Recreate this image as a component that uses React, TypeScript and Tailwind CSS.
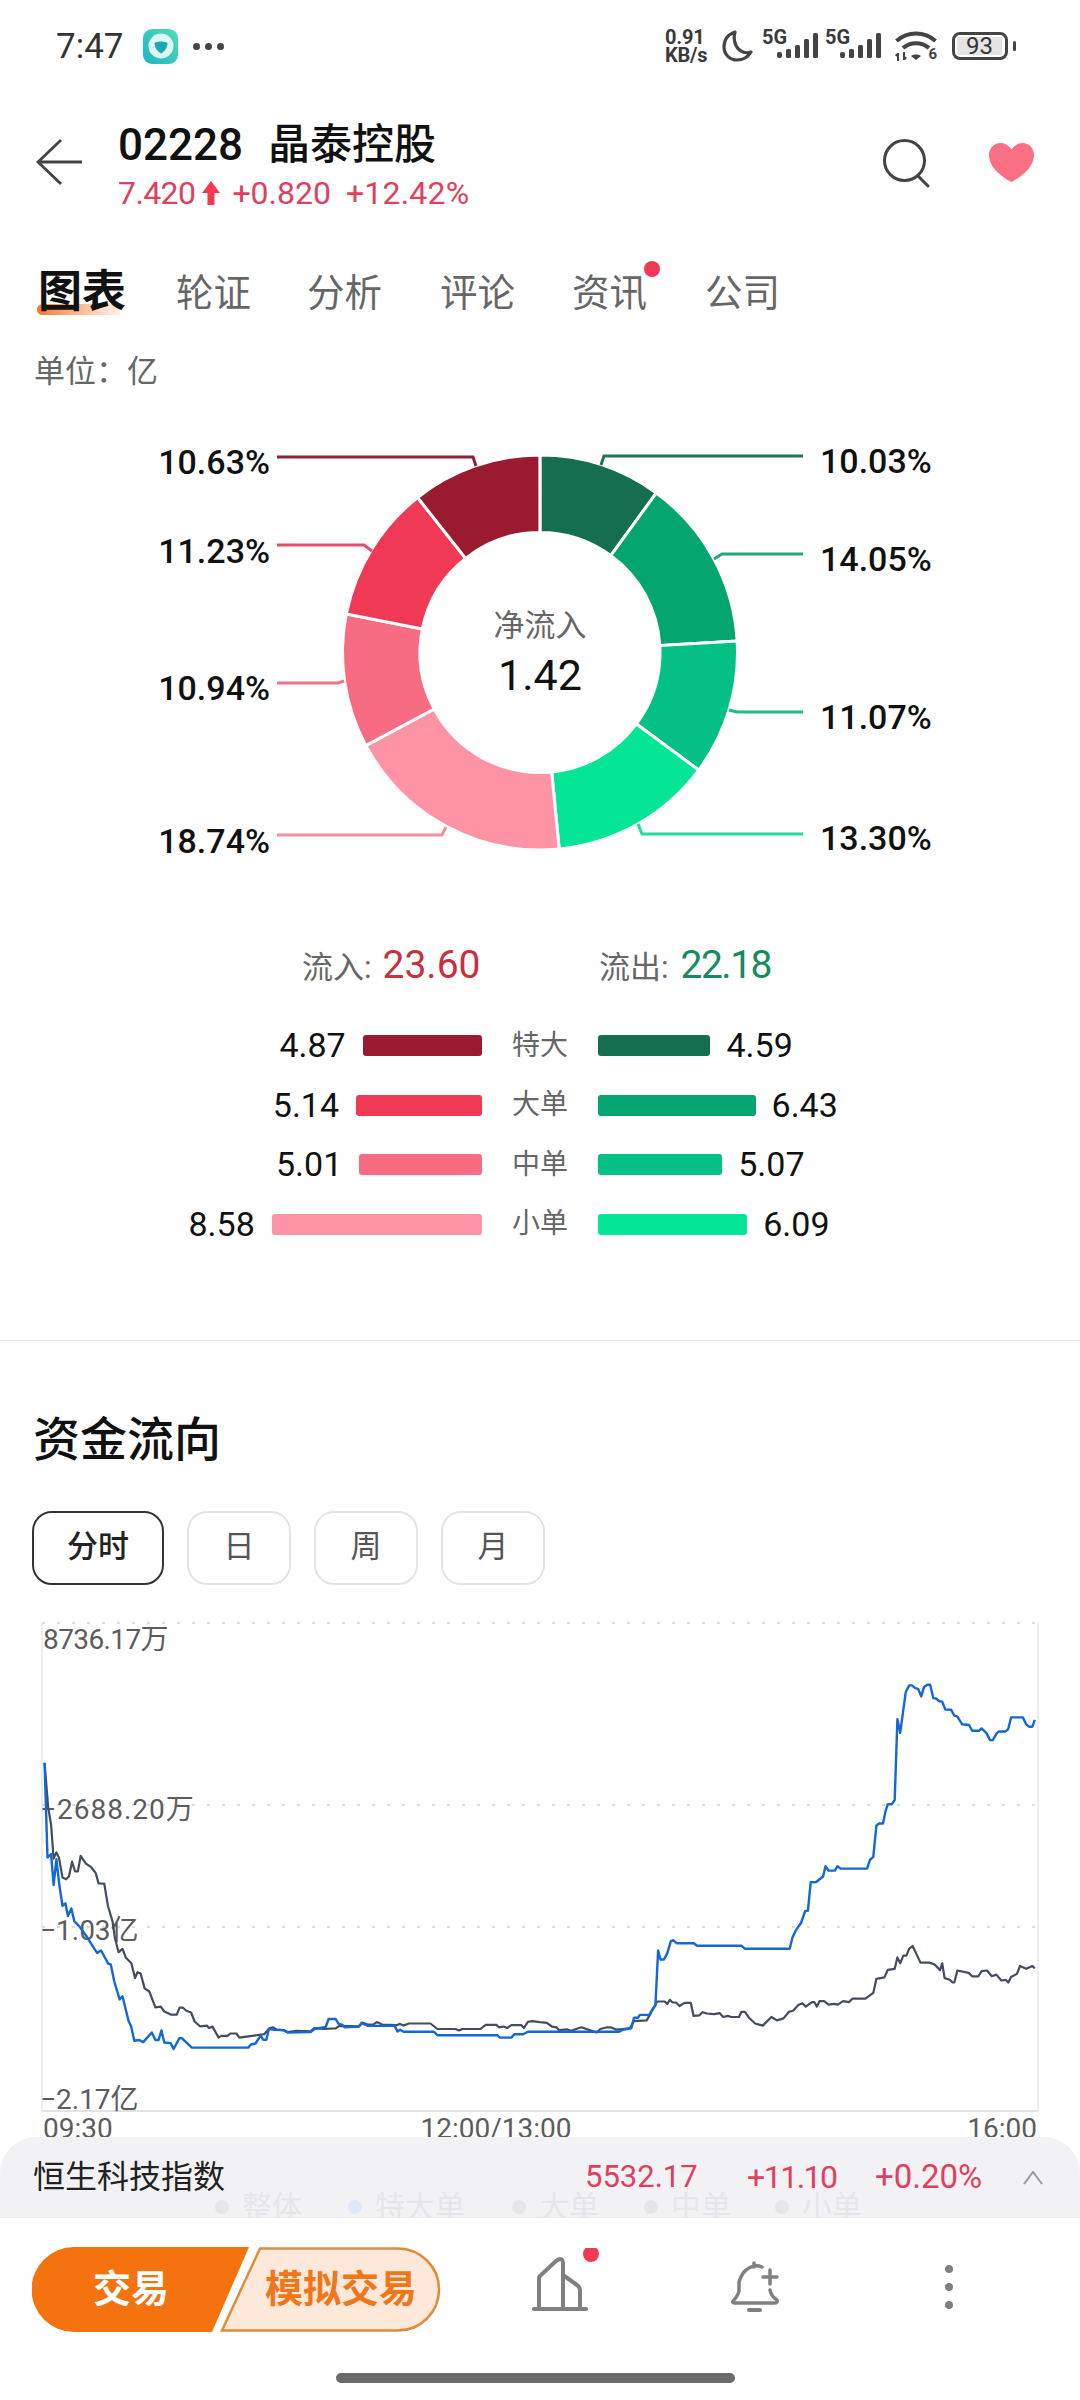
const GREENS = ["#166e51", "#04a56e", "#05c084", "#04e696"];
const REDS = ["#9a1b2f", "#ef3955", "#f76b83", "#fe93a5"];

// clockwise from 12 o'clock
const SLICES = [
  { pct: 10.03, color: GREENS[0] },
  { pct: 14.05, color: GREENS[1] },
  { pct: 11.07, color: GREENS[2] },
  { pct: 13.3, color: GREENS[3] },
  { pct: 18.74, color: REDS[3] },
  { pct: 10.94, color: REDS[2] },
  { pct: 11.23, color: REDS[1] },
  { pct: 10.63, color: REDS[0] },
];

const LEADERS = [
  { label: "10.63%", pts: "277,457 473,457 476,466", color: "#8f2335", x: 270, y: 462, end: true },
  { label: "11.23%", pts: "277,545 364,545 372,551", color: "#e0506a", x: 270, y: 551, end: true },
  { label: "10.94%", pts: "277,683 338,683 344,681", color: "#ee7389", x: 270, y: 688, end: true },
  { label: "18.74%", pts: "277,835 442,835 446,827", color: "#f28fa2", x: 270, y: 841, end: true },
  { label: "10.03%", pts: "803,456 604,456 601,465", color: "#1f7458", x: 820, y: 461, end: false },
  { label: "14.05%", pts: "803,554 722,554 714,559", color: "#1fa877", x: 820, y: 559, end: false },
  { label: "11.07%", pts: "803,712 737,712 729,710", color: "#1fbc86", x: 820, y: 717, end: false },
  { label: "13.30%", pts: "803,834 642,834 638,824", color: "#22dc98", x: 820, y: 838, end: false },
];

const ROWS = [
  { name: "特大", inflow: 4.87, outflow: 4.59, red: REDS[0], green: GREENS[0] },
  { name: "大单", inflow: 5.14, outflow: 6.43, red: REDS[1], green: GREENS[1] },
  { name: "中单", inflow: 5.01, outflow: 5.07, red: REDS[2], green: GREENS[2] },
  { name: "小单", inflow: 8.58, outflow: 6.09, red: REDS[3], green: GREENS[3] },
];

const BLUE_A = [125,470,133,745,143,735,150,825,158,750,167,830,175,885,183,878,190,915,200,893,208,930,222,945,240,970,255,995,272,1022,283,1015,303,1053,310,1055,320,1105,335,1157,343,1148,360,1220,367,1235,376,1277,390,1275,401,1281,425,1253,435,1275,444,1275,452,1247,460,1282,478,1284,486,1301,502,1270,510,1270,537,1297,695,1297,703,1288,715,1285,730,1262,737,1274,746,1274,753,1243,770,1245,795,1246,805,1253,870,1252,880,1243,912,1237,920,1214,940,1214,948,1228,958,1230,965,1238,1005,1236,1013,1226,1030,1234,1105,1234,1113,1250,1120,1245,1130,1251,1215,1251,1225,1261,1392,1261,1400,1268,1432,1268,1440,1258,1465,1258,1478,1251,1568,1251];
const BLUE_B = [230,1251,240,1245,265,1241,273,1210,285,1210,290,1202,318,1202,325,1188,335,1175,343,1015,350,1041,360,1041,370,1022,380,988,387,985,397,994,447,994,456,1001,585,1001,595,1010,725,1010,733,978,742,958,758,935,770,900,778,900,786,817,802,816,822,800,829,770,838,783,856,783,864,770,873,777,950,777,958,752,968,743,977,652,985,646,996,646,1003,612,1010,590,1022,590,1030,578,1038,343,1046,383,1062,265,1072,245,1080,245,1090,253,1098,255,1107,277,1115,250,1125,243,1133,243,1142,282,1150,283,1160,291,1168,292,1177,315,1194,316,1203,333,1212,336,1226,358,1246,360,1255,377,1275,377,1282,370,1296,383,1307,404,1315,404,1325,386,1332,379,1352,379,1360,371,1368,338,1402,338,1412,358,1420,365,1430,365,1437,345];
const DARK_A = [125,470,135,600,143,650,150,748,158,730,165,745,175,803,185,808,193,800,202,757,210,785,218,785,226,740,240,762,255,773,268,790,276,820,292,821,302,885,315,930,322,980,332,1020,343,1010,352,1035,368,1052,378,1095,385,1078,394,1082,405,1125,418,1134,435,1180,450,1178,460,1192,478,1201,495,1201,503,1181,512,1181,522,1190,535,1195,545,1221,560,1235,580,1233,585,1240,595,1236,612,1268,620,1263,637,1263,645,1256,662,1256,670,1268,690,1265,740,1258,755,1240,765,1238,775,1245,795,1247,805,1252,830,1248,870,1250,880,1240,905,1243,940,1241,950,1234,1005,1235,1013,1224,1030,1230,1045,1230,1055,1223,1070,1230,1110,1232,1120,1228,1130,1233,1145,1227,1205,1227,1225,1243,1275,1243,1285,1247,1295,1243,1345,1243,1360,1231,1390,1231,1397,1238,1410,1236,1420,1240,1432,1232,1460,1232,1467,1240,1478,1222,1490,1220,1512,1223];
const DARK_B = [20,1225,35,1236,48,1238,55,1246,80,1244,90,1248,105,1243,120,1238,135,1243,165,1253,175,1243,195,1238,205,1238,222,1245,240,1243,262,1240,272,1220,310,1218,320,1200,340,1163,362,1163,370,1170,377,1158,385,1166,395,1166,405,1176,420,1167,438,1167,446,1205,463,1203,472,1194,485,1198,505,1200,522,1197,532,1208,545,1205,555,1208,578,1208,585,1193,595,1193,607,1210,625,1227,647,1233,672,1208,688,1218,707,1212,723,1193,735,1190,750,1173,762,1168,772,1178,790,1165,797,1165,804,1178,812,1162,825,1162,838,1172,855,1170,865,1172,880,1162,897,1165,907,1155,945,1155,968,1138,977,1097,1000,1093,1010,1071,1030,1068,1038,1035,1046,1052,1055,1030,1064,1030,1072,1010,1082,1002,1105,1050,1130,1050,1145,1055,1162,1072,1168,1052,1175,1095,1190,1100,1198,1108,1203,1108,1212,1073,1245,1080,1255,1090,1273,1090,1282,1075,1298,1073,1312,1090,1325,1085,1340,1102,1352,1100,1360,1108,1368,1092,1385,1083,1394,1060,1412,1068,1430,1060,1437,1067];

function toPoints(a: number[], b: number[]) {
  const out: string[] = [];
  for (let i = 0; i < a.length; i += 2) {
    out.push(`${(a[i] / 2.8).toFixed(1)},${(a[i + 1] / 2.904 + 1600).toFixed(1)}`);
  }
  for (let i = 0; i < b.length; i += 2) {
    out.push(`${(b[i] / 2.904 + 540).toFixed(1)},${(b[i + 1] / 2.904 + 1600).toFixed(1)}`);
  }
  return out.join(" ");
}

function slicePath(startPct: number, endPct: number) {
  const cx = 540;
  const cy = 652.5;
  const R = 197.5;
  const r = 120;
  const a0 = (startPct / 100) * Math.PI * 2;
  const a1 = (endPct / 100) * Math.PI * 2;
  const p = (rad: number, a: number) =>
    `${(cx + rad * Math.sin(a)).toFixed(2)} ${(cy - rad * Math.cos(a)).toFixed(2)}`;
  const large = endPct - startPct > 50 ? 1 : 0;
  return `M${p(R, a0)} A${R} ${R} 0 ${large} 1 ${p(R, a1)} L${p(r, a1)} A${r} ${r} 0 ${large} 0 ${p(r, a0)} Z`;
}

function Donut() {
  let acc = 0;
  return (
    <svg className="block w-[1080px] h-[500px]" viewBox="0 400 1080 500">
      {SLICES.map((s) => {
        const start = acc;
        acc += s.pct;
        return <path key={s.pct} d={slicePath(start, acc)} fill={s.color} stroke="#ffffff" strokeWidth="3" />;
      })}
      {LEADERS.map((l) => (
        <g key={l.label}>
          <polyline points={l.pts} fill="none" stroke={l.color} strokeWidth="3" />
          <text x={l.x} y={l.y + 12} textAnchor={l.end ? "end" : "start"} className="fill-[#111111] text-[34px] font-medium">
            {l.label}
          </text>
        </g>
      ))}
      <text x="540" y="636" textAnchor="middle" className="fill-[#666666] text-[31px]">净流入</text>
      <text x="540" y="690" textAnchor="middle" className="fill-[#111111] text-[43px]">1.42</text>
    </svg>
  );
}

function FlowChart() {
  return (
    <svg className="block w-[1080px] h-[540px]" viewBox="0 1610 1080 540">
      <line x1="42" y1="1622" x2="42" y2="2110" stroke="#e8e8e8" strokeWidth="1.5" />
      <line x1="1038" y1="1622" x2="1038" y2="2110" stroke="#e8e8e8" strokeWidth="1.5" />
      <line x1="42" y1="2110" x2="1038" y2="2110" stroke="#e2e2e2" strokeWidth="2" />
      {[1622, 1804, 1926].map((y) => (
        <line key={y} x1="42" y1={y} x2="1038" y2={y} stroke="#dddddd" strokeWidth="2" strokeDasharray="3 12" />
      ))}
      <g className="fill-[#5c5c5c] text-[28px]">
        <text x="43" y="1648" className="tracking-[-0.6px]">8736.17万</text>
        <text x="40" y="1818" className="tracking-[1px]">−2688.20万</text>
        <text x="40" y="1939">−1.03亿</text>
        <text x="40" y="2108">−2.17亿</text>
        <text x="43" y="2137">09:30</text>
        <text x="496" y="2137" textAnchor="middle">12:00/13:00</text>
        <text x="1037" y="2137" textAnchor="end">16:00</text>
      </g>
      <polyline points={toPoints(DARK_A, DARK_B)} fill="none" stroke="#444c5e" strokeWidth="2.2" strokeLinejoin="round" />
      <polyline points={toPoints(BLUE_A, BLUE_B)} fill="none" stroke="#1467d6" strokeWidth="2.400" strokeLinejoin="round" />
    </svg>
  );
}

function Signal() {
  return (
    <div className="relative w-[56px] h-[32px]">
      <span className="absolute left-0 top-[-3px] text-[20px] leading-[20px] font-bold text-[#3a3a3a]">5G</span>
      <svg className="absolute right-0 top-[3px]" width="41" height="25" viewBox="0 0 41 25" fill="#444444">
        <rect x="0" y="19" width="5" height="6" rx="2" />
        <rect x="9" y="16" width="5" height="9" rx="1.500" />
        <rect x="18" y="12" width="5" height="13" rx="1.500" />
        <rect x="27" y="6" width="5" height="19" rx="1.500" />
        <rect x="36" y="0" width="5" height="25" rx="1.500" />
      </svg>
    </div>
  );
}

function StatusBar() {
  return (
    <div className="h-[92px] flex items-center pl-[56px] pr-[64px] text-[#333333]">
      <span className="w-[69px] text-[35px] leading-none">7:47</span>
      <div className="ml-[18px] w-[35px] h-[35px] rounded-[9px] bg-gradient-to-tr from-[#18b6c4] to-[#4fdcb5] flex items-center justify-center">
        <svg width="28" height="28" viewBox="0 0 28 28">
          <circle cx="14" cy="14" r="12.500" fill="#dff7f3" />
          <path d="M7.500 11c4-2 9-2 13 0 0 4.500-2.500 8-6.500 10.500C10 19 7.500 15.500 7.500 11z" fill="#1aa9b4" />
        </svg>
      </div>
      <div className="ml-[15px] flex gap-[5px]">
        <span className="w-[7px] h-[7px] rounded-full bg-[#444444]" />
        <span className="w-[7px] h-[7px] rounded-full bg-[#444444]" />
        <span className="w-[7px] h-[7px] rounded-full bg-[#444444]" />
      </div>
      <div className="ml-auto flex items-center">
        <div className="w-[47px] text-[20px] leading-[18px] font-bold text-[#3a3a3a] tracking-[-0.2px] whitespace-nowrap">
          0.91
          <br />
          KB/s
        </div>
        <svg className="ml-[10px]" width="31" height="32" viewBox="0 0 31 32" fill="none">
          <path d="M13 2C6 4.500 2 10 2 17c0 7.500 6 13 13 13 6 0 11-3 14-8-3 1-7 1-10-1-6-3.500-8-12-6-19z" stroke="#444444" strokeWidth="3.200" strokeLinejoin="round" />
        </svg>
        <div className="ml-[9px]"><Signal /></div>
        <div className="ml-[7px]"><Signal /></div>
        <div className="relative ml-[14px] w-[42px] h-[31px]">
          <svg width="42" height="31" viewBox="0 0 42 31" fill="none" stroke="#444444" strokeWidth="4">
            <path d="M1.500 10C12.500 0 29.500 0 40.500 10" />
            <path d="M8 17c7.500-6.500 18.500-6.500 26 0" />
            <path d="M16 25l5 4 5-4c-3-2-7-2-10 0z" fill="#444444" stroke="none" />
            <path d="M3 22v8M2 23l-1 2M9 21v8M10 28l1-2" strokeWidth="2" />
          </svg>
          <span className="absolute right-0 bottom-0 text-[15px] leading-[15px] font-bold text-[#444444]">6</span>
        </div>
        <div className="ml-[15px] flex items-center">
          <div className="w-[56px] h-[28px] rounded-[8px] border-[3px] border-[#444444] p-[2px]">
            <div className="w-[45px] h-full rounded-[2px] bg-[#e4e4e4] flex items-center justify-center text-[24px] leading-none text-[#333333]">
              93
            </div>
          </div>
          <div className="ml-[5px] w-[3px] h-[10px] rounded bg-[#444444]" />
        </div>
      </div>
    </div>
  );
}

function Header() {
  return (
    <div className="h-[146px] flex items-start pt-[26px]">
      <svg className="ml-[36px] mt-[20px]" width="46" height="48" viewBox="0 0 46 48" fill="none" stroke="#444444" strokeWidth="2.800">
        <path d="M25 2L2 24l23 22M2 24h44" />
      </svg>
      <div className="ml-[36px]">
        <div className="flex items-center h-[54px] text-[#111111] font-medium">
          <span className="text-[44px] leading-none">02228</span>
          <span className="ml-[25px] text-[42px] leading-none">晶泰控股</span>
        </div>
        <div className="mt-[2px] flex items-center h-[38px] text-[32px] text-[#e0405e]">
          <span className="tracking-[-0.6px]">7.420</span>
          <svg className="ml-[6px]" width="20" height="26" viewBox="0 0 20 26" fill="#ef3955">
            <path d="M10 1l9 12h-5.500v12h-7V13H1z" />
          </svg>
          <span className="ml-[11px]">+0.820</span>
          <span className="ml-[15px] tracking-[0.2px]">+12.42%</span>
        </div>
      </div>
      <svg className="ml-auto mt-[20px]" width="48" height="50" viewBox="0 0 48 50" fill="none" stroke="#444444" strokeWidth="3" strokeLinecap="round">
        <circle cx="22.500" cy="22.500" r="20" />
        <path d="M36 38l10 10" />
      </svg>
      <svg className="ml-[59px] mr-[46px] mt-[25px]" width="45" height="39" viewBox="0 0 45 39" fill="#fb6f85">
        <path d="M22.500 39C16 35.500 0 26 0 12 0 5 5 0 11.500 0c4.500 0 8.500 2.500 11 6.500C25 2.500 29 0 33.500 0 40 0 45 5 45 12c0 14-16 23.500-22.500 27z" />
      </svg>
    </div>
  );
}

function Tabs() {
  return (
    <div className="h-[108px] flex items-center pl-[38px] text-[37.500px] text-[#666666]">
      <div className="relative w-[88px] mr-[50px] h-[50px] flex items-center">
        <div className="absolute left-[-1px] top-[37px] w-[83px] h-[11px] rounded-l-full bg-gradient-to-r from-[#f5791f] to-[#fff2e8]" />
        <span className="relative text-[44px] leading-none font-semibold text-[#111111]">图表</span>
      </div>
      <span className="mt-[2px] w-[76px] mr-[55px]">轮证</span>
      <span className="mt-[2px] w-[76px] mr-[57px]">分析</span>
      <span className="mt-[2px] w-[76px] mr-[56px]">评论</span>
      <span className="relative mt-[2px] w-[76px] mr-[57px]">
        资讯
        <span className="absolute right-[-12px] top-[-4px] w-[16px] h-[16px] rounded-full bg-[#ef3955]" />
      </span>
      <span className="mt-[2px] w-[76px]">公司</span>
    </div>
  );
}

function FlowBreakdown() {
  return (
    <div className="text-[#111111]">
      <div className="h-[60px] relative flex items-center">
        <div className="w-[599px] pl-[302px] flex items-baseline">
          <span className="text-[31px] text-[#666666]">流入:</span>
          <span className="ml-[11px] text-[39px] text-[#c8303f]">23.60</span>
        </div>
        <div className="flex items-baseline">
          <span className="text-[31px] text-[#666666]">流出:</span>
          <span className="ml-[12px] text-[39px] tracking-[-1.500px] text-[#178a5f]">22.18</span>
        </div>
      </div>
      <div className="mt-[25px] flex flex-col gap-[38.500px]">
        {ROWS.map((r) => (
          <div key={r.name} className="grid grid-cols-[482px_116px_1fr] items-center h-[21px]">
            <div className="flex items-center justify-end gap-[17px] text-[34px]">
              <span>{r.inflow.toFixed(2)}</span>
              <div className="h-[21px] rounded-[3px]" style={{ width: r.inflow * 24.5, background: r.red }} />
            </div>
            <span className="text-center text-[28px] text-[#666666]">{r.name}</span>
            <div className="flex items-center gap-[16px] text-[34px]">
              <div className="h-[21px] rounded-[3px]" style={{ width: r.outflow * 24.5, background: r.green }} />
              <span>{r.outflow.toFixed(2)}</span>
            </div>
          </div>
        ))}
      </div>
    </div>
  );
}

function Dock() {
  return (
    <div className="absolute left-0 right-0 bottom-0">
      <div className="h-[80px] rounded-t-[36px] bg-[#f2f2f5] overflow-hidden relative">
        <div className="h-[80px] flex items-center pl-[33px] text-[32px] leading-[28px]">
          <span className="text-[#222222]">恒生科技指数</span>
          <span className="absolute left-[585px] text-[31px] text-[#e0405e]">5532.17</span>
          <span className="absolute left-[747px] tracking-[-1.500px] text-[#e0405e]">+11.10</span>
          <span className="absolute left-[875px] text-[33px] text-[#e0405e]">+0.20%</span>
          <svg className="absolute left-[1023px] top-[34px]" width="20" height="14" viewBox="0 0 20 14" fill="none" stroke="#999999" strokeWidth="2">
            <path d="M1 13L10 1l9 12" />
          </svg>
        </div>
        <div className="absolute top-[55px] left-0 right-0 text-[30px] leading-[30px] text-[#e6e6ea]">
          {[
            { l: 215, t: "整体", c: "#e6e6ea" },
            { l: 348, t: "特大单", c: "#dfe8f6" },
            { l: 512, t: "大单", c: "#e6e6ea" },
            { l: 644, t: "中单", c: "#e6e6ea" },
            { l: 775, t: "小单", c: "#e6e6ea" },
          ].map((x) => (
            <div key={x.t} className="absolute flex items-center gap-[13px]" style={{ left: x.l }}>
              <span className="w-[14px] h-[14px] rounded-full" style={{ background: x.c }} />
              <span>{x.t}</span>
            </div>
          ))}
        </div>
      </div>
      <div className="h-[183px] bg-white border-t border-[#e9e9ec] relative">
        <div className="absolute left-[32px] top-[29px] w-[410px] h-[85px]">
          <svg className="absolute inset-0" width="410" height="85" viewBox="0 0 410 85">
            <path d="M42 0H217L180 85H42A42 42 0 0 1 42 0Z" fill="#f5730f" />
            <path d="M228 1.500H366A41 41 0 0 1 366 83.500H190Z" fill="#fde8d9" stroke="#e08a3c" strokeWidth="2.500" />
          </svg>
          <span className="absolute left-[61px] top-0 leading-[85px] text-[38px] font-semibold text-white">交易</span>
          <span className="absolute left-[233px] top-0 leading-[85px] text-[38px] font-semibold text-[#f0761a]">模拟交易</span>
        </div>
        <svg className="absolute left-[530px] top-[30px]" width="70" height="70" viewBox="0 0 70 70" fill="none" stroke="#808080" strokeWidth="4" strokeLinejoin="round">
          <path d="M9 61V31Q9 28 11 27L26 13Q33 8 33 16V61M33 27L47 37Q50 39 50 42V61" />
          <path d="M4 61H56" strokeLinecap="round" />
          <circle cx="61" cy="6" r="8" fill="#ef3955" stroke="none" />
        </svg>
        <svg className="absolute left-[729px] top-[40px]" width="52" height="58" viewBox="0 0 52 58" fill="none" stroke="#808080" strokeWidth="3.500" strokeLinecap="round" strokeLinejoin="round">
          <path d="M25 5v4M33 9C26 6 14 9 10 24V33Q9 38 4 43Q3 45 6 45H45Q49 45 48 42Q42 38 41 32" />
          <path d="M41 12v14M34 19h14" />
          <path d="M20 52h11" strokeWidth="4" />
        </svg>
        <div className="absolute left-[945px] top-[47px] flex flex-col gap-[10px]">
          <span className="w-[8px] h-[8px] rounded-full bg-[#808080]" />
          <span className="w-[8px] h-[8px] rounded-full bg-[#808080]" />
          <span className="w-[8px] h-[8px] rounded-full bg-[#808080]" />
        </div>
        <div className="absolute left-[336px] top-[155px] w-[399px] h-[10px] rounded-full bg-[#6b6b6b]" />
      </div>
    </div>
  );
}

export default function App() {
  return (
    <div className="relative w-[1080px] h-[2400px] overflow-hidden bg-white font-[Roboto,'Noto_Sans_CJK_SC',sans-serif]">
      <StatusBar />
      <Header />
      <Tabs />
      <div className="h-[52px] flex items-center pl-[34px] text-[31px] text-[#666666]">{"单位\uFF1A亿"}</div>
      <div className="mt-[2px]">
        <Donut />
      </div>
      <div className="mt-[35px]">
        <FlowBreakdown />
      </div>
      <div className="mt-[120px] border-t border-[#e8e8e8]">
        <h2 className="mt-[72px] pl-[33px] h-[56px] flex items-center text-[47px] font-medium text-[#111111]">资金流向</h2>
        <div className="mt-[42px] pl-[32px] flex gap-[23px] text-[31px] text-[#555555]">
          <div className="w-[132px] h-[74px] rounded-[20px] border-2 border-[#333333] flex items-center justify-center font-medium text-[#222222]">分时</div>
          <div className="w-[104px] h-[74px] rounded-[20px] border-2 border-[#e4e4e4] flex items-center justify-center">日</div>
          <div className="w-[104px] h-[74px] rounded-[20px] border-2 border-[#e4e4e4] flex items-center justify-center">周</div>
          <div className="w-[104px] h-[74px] rounded-[20px] border-2 border-[#e4e4e4] flex items-center justify-center">月</div>
        </div>
        <div className="mt-[26px]">
          <FlowChart />
        </div>
      </div>
      <Dock />
    </div>
  );
}
